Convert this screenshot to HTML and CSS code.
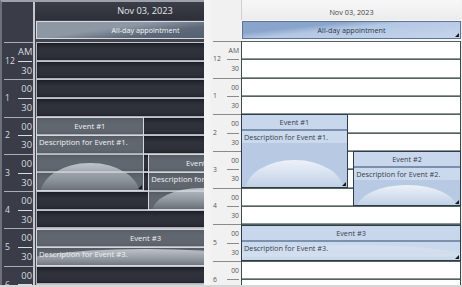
FILE: index.html
```html
<!DOCTYPE html>
<html lang="en">
<head>
  <meta charset="UTF-8" />
  <title>Day view</title>
  <link rel="stylesheet" href="styles.css">
</head>
<body>
  <div class="app">
    <div class="sched dark">
      <div class="times">
        <div class="times-top"></div>
        <div class="hour"><span class="num">12</span><span class="mins"><span>AM</span><span>30</span></span></div>
        <div class="hour"><span class="num">1</span><span class="mins"><span>00</span><span>30</span></span></div>
        <div class="hour"><span class="num">2</span><span class="mins"><span>00</span><span>30</span></span></div>
        <div class="hour"><span class="num">3</span><span class="mins"><span>00</span><span>30</span></span></div>
        <div class="hour"><span class="num">4</span><span class="mins"><span>00</span><span>30</span></span></div>
        <div class="hour"><span class="num">5</span><span class="mins"><span>00</span><span>30</span></span></div>
        <div class="hour"><span class="num">6</span><span class="mins"><span>00</span><span>30</span></span></div>
      </div>
      <div class="day">
        <div class="day-head">Nov 03, 2023</div>
        <div class="allday-row"><div class="allday">All-day appointment<span class="grip"></span></div></div>
        <div class="slots">
          <div class="slot"></div><div class="slot"></div><div class="slot"></div><div class="slot"></div>
          <div class="slot"></div><div class="slot"></div><div class="slot"></div><div class="slot"></div>
          <div class="slot"></div><div class="slot"></div><div class="slot"></div><div class="slot"></div>
          <div class="slot"></div><div class="slot"></div>
          <div class="event ev1">
            <div class="ev-title">Event #1</div>
            <div class="ev-desc">Description for Event #1.</div>
            <span class="grip"></span>
          </div>
          <div class="event ev2">
            <div class="ev-title">Event #2</div>
            <div class="ev-desc">Description for Event #2.</div>
            <span class="grip"></span>
          </div>
          <div class="event ev3">
            <div class="ev-title">Event #3</div>
            <div class="ev-desc">Description for Event #3.</div>
            <span class="grip"></span>
          </div>
        </div>
      </div>
    </div>

    <div class="sched light">
      <div class="times">
        <div class="times-top"></div>
        <div class="hour"><span class="num">12</span><span class="mins"><span>AM</span><span>30</span></span></div>
        <div class="hour"><span class="num">1</span><span class="mins"><span>00</span><span>30</span></span></div>
        <div class="hour"><span class="num">2</span><span class="mins"><span>00</span><span>30</span></span></div>
        <div class="hour"><span class="num">3</span><span class="mins"><span>00</span><span>30</span></span></div>
        <div class="hour"><span class="num">4</span><span class="mins"><span>00</span><span>30</span></span></div>
        <div class="hour"><span class="num">5</span><span class="mins"><span>00</span><span>30</span></span></div>
        <div class="hour"><span class="num">6</span><span class="mins"><span>00</span><span>30</span></span></div>
      </div>
      <div class="day">
        <div class="day-head">Nov 03, 2023</div>
        <div class="allday-row"><div class="allday">All-day appointment<span class="grip"></span></div></div>
        <div class="slots">
          <div class="slot"></div><div class="slot"></div><div class="slot"></div><div class="slot"></div>
          <div class="slot"></div><div class="slot"></div><div class="slot"></div><div class="slot"></div>
          <div class="slot"></div><div class="slot"></div><div class="slot"></div><div class="slot"></div>
          <div class="slot"></div><div class="slot"></div>
          <div class="event ev1">
            <div class="ev-title">Event #1</div>
            <div class="ev-desc">Description for Event #1.</div>
            <span class="grip"></span>
          </div>
          <div class="event ev2">
            <div class="ev-title">Event #2</div>
            <div class="ev-desc">Description for Event #2.</div>
            <span class="grip"></span>
          </div>
          <div class="event ev3">
            <div class="ev-title">Event #3</div>
            <div class="ev-desc">Description for Event #3.</div>
            <span class="grip"></span>
          </div>
        </div>
      </div>
    </div>
  </div>
</body>
</html>
```

FILE: styles.css
```css
body {
  margin: 0;
  background: #f4f4f4;
  font-family: 'Open Sans', 'DejaVu Sans', sans-serif;
}
.app {
  display: flex;
  gap: 6px;
  height: 285px;
  border-bottom: 2px solid #d6d6d6;
}
.sched {
  display: flex;
  height: 285px;
  overflow: hidden;
  box-sizing: border-box;
}
.times {
  flex: none;
  display: flex;
  flex-direction: column;
}
.times-top {
  flex: none;
}
.hour {
  flex: none;
  display: flex;
  align-items: center;
  box-sizing: border-box;
  height: var(--hour);
  border-top: 1px solid;
}
.num {
  flex: 1;
  line-height: 1;
}
.mins {
  display: flex;
  flex-direction: column;
  text-align: right;
}
.mins span {
  display: block;
  height: calc(var(--hour) / 2 - 1px);
  line-height: calc(var(--hour) / 2 - 1px);
}
.mins span:first-child {
  border-bottom: 1px solid;
}
.day {
  flex: none;
  width: 220px;
  display: flex;
  flex-direction: column;
}
.day-head {
  text-align: center;
  flex: none;
}
.allday-row {
  flex: none;
  box-sizing: border-box;
  padding: 1px 0 0 1px;
}
.allday {
  position: relative;
  box-sizing: border-box;
  height: 18px;
  line-height: 16px;
  text-align: center;
  font-size: 7.2px;
}
.slots {
  position: relative;
  flex: 1;
}
.slot {
  box-sizing: border-box;
  height: calc(var(--hour) / 2);
}
.event {
  position: absolute;
  box-sizing: border-box;
  overflow: hidden;
}
.event::after {
  content: "";
  position: absolute;
  left: 3%;
  right: 3%;
  top: 62%;
  height: 90%;
  border-radius: 50%;
}
.ev-title, .ev-desc {
  position: relative;
  z-index: 1;
  white-space: nowrap;
}
.ev-title {
  text-align: center;
}
.ev-desc {
  padding: 1px 2px;
}
.ev1 {
  left: 0;
  width: 49%;
  top: calc(var(--hour) * 2);
  height: calc(var(--hour) * 2);
}
.ev2 {
  left: 51%;
  right: 0;
  top: calc(var(--hour) * 3);
  height: calc(var(--hour) * 1.5);
}
.ev3 {
  left: 0;
  right: 0;
  top: calc(var(--hour) * 5);
  height: var(--hour);
}
.ev3::after {
  left: -15%;
  right: -15%;
  top: 55%;
  height: 120%;
}
.grip {
  position: absolute;
  right: 1px;
  bottom: 1px;
  z-index: 2;
  width: 0;
  height: 0;
  border-left: 4px solid transparent;
  border-bottom: 4px solid #15181d;
}

/* dark theme */
.dark {
  --hour: 37.3px;
  width: 204px;
  background: #3a3d47;
  border-left: 2px solid #6c7079;
  border-top: 2px solid #9da1a9;
  color: #d8dbe0;
}
.dark .times {
  width: 31px;
  border-right: 2px solid #c3c7cd;
}
.dark .times-top {
  height: 40px;
}
.dark .hour {
  margin-left: 2px;
  padding-right: 1px;
  border-color: #a9adb4;
  font-size: 9.4px;
}
.dark .num {
  padding-left: 1px;
  font-size: 8.6px;
}
.dark .mins {
  width: 14px;
}
.dark .day {
  background: #41444e;
}
.dark .day-head {
  height: 18px;
  line-height: 18px;
  font-size: 9.2px;
  color: #e4e6ea;
  background: linear-gradient(#3b3e48, #2d3038);
}
.dark .allday-row {
  height: 22px;
}
.dark .allday {
  color: #f1f3f6;
  border: 1px solid #d8dce1;
  background: linear-gradient(172deg, #8e98a5 0 35%, #5d6979 60%, #4f5b6b);
}
.dark .slot {
  margin-left: 1px;
  border: 1px solid #aeb2ba;
  border-top-color: #c0c4cb;
  background: linear-gradient(#23252c, #30333c 40%, #2c2e36);
  box-shadow: inset 0 0 3px #15161a;
}
.dark .event {
  margin-left: 1px;
  border: 1px solid #d5d9de;
  background: rgba(168, 176, 186, 0.42);
  color: #eef0f3;
  font-size: 7.7px;
}
.dark .event::after {
  background: linear-gradient(rgba(215, 220, 227, 0.8), rgba(150, 158, 168, 0.15) 45%);
}
.dark .ev-title {
  height: 17px;
  line-height: 17px;
  border-bottom: 1px solid rgba(225, 229, 234, 0.7);
}

/* light theme */
.light {
  --hour: 36.7px;
  width: 252px;
  background: #f1f1f1;
  color: #555;
}
.light .times {
  width: 31px;
}
.light .times-top {
  height: 41px;
}
.light .hour {
  margin-left: 3px;
  padding-right: 2px;
  border-color: #8a8a8a;
  font-size: 6.8px;
}
.light .mins {
  width: 12px;
}
.light .hour .mins span:first-child {
  border-color: #8a8a8a;
}
.light .day-head {
  height: 20px;
  line-height: 24px;
  font-size: 7.3px;
  color: #444;
  border-left: 1px solid #cfcfcf;
  background: linear-gradient(#f7f7f7, #ececec);
}
.light .allday-row {
  height: 21px;
  background: #f7f7f7;
}
.light .allday {
  color: #2c3a4c;
  border: 1px solid #5a7396;
  background: linear-gradient(174deg, #8aa5cb 0 28%, #b4c7e3 45%, #c6d5eb);
}
.light .slots {
  background: #fff;
  border-left: 1px solid #3f4c47;
  border-right: 1px solid #3f4c47;
}
.light .slot {
  border-top: 1px solid #55635d;
  border-bottom: 1px solid #8c9793;
  background: #fff;
}
.light .event {
  border: 1px solid #2d3b4a;
  background: #b8cae3;
  color: #34414f;
  font-size: 7.3px;
}
.light .event::after {
  background: linear-gradient(rgba(240, 244, 250, 0.95), rgba(190, 206, 228, 0.2) 50%);
}
.light .ev-title {
  height: 14px;
  line-height: 14px;
  background: #c8d7ec;
  border-bottom: 2px solid #7a90ac;
}
.light .ev-desc {
  background: rgba(206, 220, 238, 0.8);
}
.light .ev1 {
  left: -1px;
}
.light .ev2 {
  right: -1px;
}
.light .ev3 {
  left: -1px;
  right: -1px;
}
```
